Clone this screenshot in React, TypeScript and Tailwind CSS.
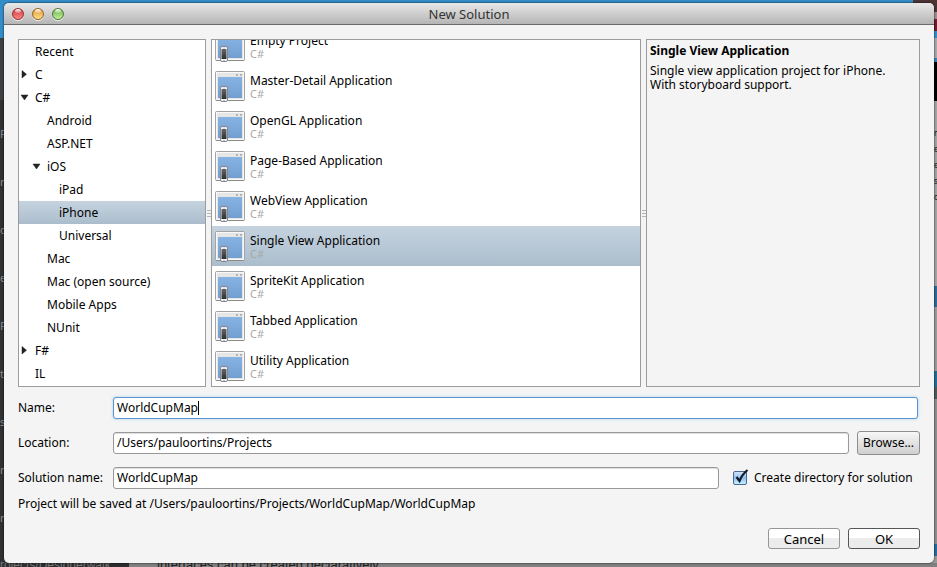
import React, { useState } from "react";

type Node = { label: string; level: 0 | 1 | 2; state?: "open" | "closed" };

const TREE: Node[] = [
  { label: "Recent", level: 0 },
  { label: "C", level: 0, state: "closed" },
  { label: "C#", level: 0, state: "open" },
  { label: "Android", level: 1 },
  { label: "ASP.NET", level: 1 },
  { label: "iOS", level: 1, state: "open" },
  { label: "iPad", level: 2 },
  { label: "iPhone", level: 2 },
  { label: "Universal", level: 2 },
  { label: "Mac", level: 1 },
  { label: "Mac (open source)", level: 1 },
  { label: "Mobile Apps", level: 1 },
  { label: "NUnit", level: 1 },
  { label: "F#", level: 0, state: "closed" },
  { label: "IL", level: 0 },
];

const TEMPLATES = [
  "Empty Project",
  "Master-Detail Application",
  "OpenGL Application",
  "Page-Based Application",
  "WebView Application",
  "Single View Application",
  "SpriteKit Application",
  "Tabbed Application",
  "Utility Application",
];

const INDENT = { 0: "pl-0", 1: "pl-3", 2: "pl-6" };
const SELECTED = "bg-linear-to-b from-[#c5d3df] to-[#abbdcc]";

function Triangle({ state }: { state?: "open" | "closed" }) {
  return (
    <svg className="h-3 w-4 shrink-0" viewBox="0 0 16 12" aria-hidden="true">
      {state === "open" && <path d="M2 3h7L5.500 8z" fill="#222" stroke="#222" strokeWidth="0.5" />}
      {state === "closed" && <path d="M3 1.500v7.500L7.500 5.250z" fill="#222" stroke="#222" strokeWidth="0.5" />}
    </svg>
  );
}

function TemplateIcon() {
  return (
    <svg className="h-8 w-[30px] shrink-0" viewBox="0 0 30 32" aria-hidden="true">
      <defs>
        <linearGradient id="pane" x1="0" y1="0" x2="0" y2="1">
          <stop offset="0" stopColor="#87b3e3" />
          <stop offset="1" stopColor="#719fd0" />
        </linearGradient>
        <linearGradient id="screen" x1="0" y1="0" x2="0" y2="1">
          <stop offset="0" stopColor="#666" />
          <stop offset="1" stopColor="#2e2e2e" />
        </linearGradient>
      </defs>
      <rect x="0.5" y="1.500" width="29" height="29" rx="1" fill="#e6e6e6" stroke="#a3a3a3" />
      <path d="M1 30.500h28" stroke="#8a8a8a" />
      <rect x="1.500" y="2.500" width="27" height="27" fill="none" stroke="#f8f8f8" />
      <rect x="21" y="4" width="2" height="2" fill="#b4b4b4" />
      <rect x="25" y="4" width="2" height="2" fill="#b4b4b4" />
      <rect x="3" y="7" width="24" height="21" fill="url(#pane)" />
      <rect x="5.500" y="16.500" width="7" height="15" rx="1.500" fill="#f6f6f6" stroke="#7f8894" />
      <rect x="6.500" y="19" width="5" height="10" fill="url(#screen)" />
      <path d="M8 18h2M8 30.500h2" stroke="#c4c4c4" />
    </svg>
  );
}

function Light({ tone, label }: { tone: string; label: string }) {
  return (
    <button
      type="button"
      aria-label={label}
      className={`relative size-3 overflow-hidden rounded-full border shadow-[0_1px_0_#f0f0f0] ${tone}`}
    >
      <span className="absolute inset-x-[2px] top-0 h-1 rounded-full bg-linear-to-b from-white to-white/20" />
    </button>
  );
}

function Splitter() {
  return (
    <div className="flex w-[5px] shrink-0 flex-col items-center justify-center gap-[2px]">
      <span className="h-px w-1 bg-[#b5b5b5]" />
      <span className="h-px w-1 bg-[#b5b5b5]" />
      <span className="h-px w-1 bg-[#b5b5b5]" />
    </div>
  );
}

const LEFT_SCRAPS = ["F", "r", "o", "e", "F", "t", "s", "r", "r"];
const RIGHT_SCRAPS = ["n", "e", "e", "s", "o"];

function Backdrop() {
  return (
    <div aria-hidden="true" className="absolute inset-0 -z-10 flex flex-col overflow-hidden bg-[#808080]">
      <div className="flex min-h-0 flex-1 justify-between">
        <div className="flex w-1/2 flex-col bg-[#2f3132]">
          <div className="h-[38px] shrink-0 bg-[#348cc9]" />
          <div className="h-[62px] shrink-0 bg-[#3e4143]" />
          <div className="flex w-1 flex-col overflow-hidden pt-[10px] text-[11px] text-[#8a8a8a]">
            {LEFT_SCRAPS.map((s, i) => (
              <span key={i} className="h-12 shrink-0 leading-[48px]">{s}</span>
            ))}
          </div>
        </div>
        <div className="flex w-1/2 flex-col bg-[#9a9a9a]">
          <div className="flex h-[38px] justify-end bg-[#348cc9]">
            <div className="flex flex-col">
              <div className="h-3 w-6 bg-[#4c3434]" />
              <div className="h-[7px] w-6 bg-[#9d8d90]" />
              <div className="h-3 w-6 bg-[#6f1c2e]" />
            </div>
          </div>
          <div className="h-5 bg-[#a6a8aa]" />
          <div className="h-1 bg-[#3283bb]" />
          <div className="h-[39px] bg-black" />
          <div className="flex h-[185px] flex-col items-end overflow-hidden bg-[#a3a3a3] pt-6 text-[8px] leading-4 text-[#222]">
            {RIGHT_SCRAPS.map((s, i) => (
              <span key={i} className="w-[3px] overflow-hidden">{s}</span>
            ))}
          </div>
          <div className="h-[21px] bg-[#2d6b98]" />
          <div className="h-[64px] bg-[#9a9a9a]" />
          <div className="h-4 bg-[#226d98]" />
          <div className="h-3 bg-[#4b5959]" />
          <div className="h-[145px] bg-[#8e8e8e]" />
          <div className="h-3 bg-[#286c9c]" />
        </div>
      </div>
      <div className="flex h-1 bg-[#808080] font-['Liberation_Sans',sans-serif] leading-1 whitespace-nowrap">
        <div className="w-[129px] bg-[#2b2d2e] text-xs leading-1 text-[#777]">rojects/Designerwalk</div>
        <div className="pl-7 text-[13px] leading-1 text-[#222]">interfaces can be created declaratively...</div>
      </div>
    </div>
  );
}

const FIELD =
  "h-[22px] min-w-0 flex-1 rounded-[3px] border border-[#999] bg-white px-[3px] shadow-[inset_0_1px_1px_#ddd] outline-none";

export default function App() {
  const [tree, setTree] = useState("iPhone");
  const [template, setTemplate] = useState("Single View Application");

  return (
    <div className="relative isolate flex min-h-screen flex-col pt-[3px] pr-[3px] pb-1 pl-1 font-['Noto_Sans','Open_Sans',sans-serif] text-xs text-black">
      <Backdrop />
      <main className="flex flex-1 flex-col overflow-hidden rounded-[5px] bg-[#f4f4f4] shadow-[0_0_2px_#000]">
        <header className="flex h-[22px] items-center border-b border-[#6b6b6b] bg-linear-to-b from-[#e8e8e8] to-[#b5b5b5] px-2">
          <div className="flex flex-1 gap-2">
            <Light label="Close" tone="border-[#8f3434] bg-linear-to-b from-[#c93440] to-[#ff8585]" />
            <Light label="Minimize" tone="border-[#946329] bg-linear-to-b from-[#dc942f] to-[#ffe28a]" />
            <Light label="Zoom" tone="border-[#4b7a34] bg-linear-to-b from-[#69ad4b] to-[#c4f09a]" />
          </div>
          <h1 className="text-[13px] leading-5 text-[#333]">New Solution</h1>
          <div className="flex-1" />
        </header>

        <div className="flex min-h-0 flex-1 flex-col p-[14px]">
          <div className="flex h-[348px] flex-auto">
            <nav className="w-[188px] shrink-0 overflow-hidden border border-[#9c9c9c] bg-white">
              {TREE.map((n) => (
                <button
                  key={n.label}
                  type="button"
                  onClick={() => setTree(n.label)}
                  className={`flex h-[23px] w-full items-center text-left ${tree === n.label ? SELECTED : ""}`}
                >
                  <span className={`flex items-center ${INDENT[n.level]}`}>
                    <Triangle state={n.state} />
                    {n.label}
                  </span>
                </button>
              ))}
            </nav>
            <Splitter />
            <section className="flex min-w-0 flex-1 flex-col justify-end overflow-hidden border border-[#9c9c9c] bg-white">
              {TEMPLATES.map((t) => (
                <button
                  key={t}
                  type="button"
                  onClick={() => setTemplate(t)}
                  className={`flex h-10 w-full shrink-0 items-center gap-[5px] pl-[3px] text-left ${template === t ? SELECTED : ""}`}
                >
                  <TemplateIcon />
                  <span className="flex flex-col pt-px">
                    <span className="leading-[14px]">{t}</span>
                    <span className="text-[11px] leading-[11px] text-[#a8a8a8]">C#</span>
                  </span>
                </button>
              ))}
            </section>
            <Splitter />
            <section className="w-[274px] shrink-0 border border-[#9c9c9c] px-[3px] py-1 leading-[14px]">
              <h2 className="mb-[6px] font-bold">Single View Application</h2>
              <p>
                Single view application project for iPhone.
                <br />
                With storyboard support.
              </p>
            </section>
          </div>

          <form className="mt-[3px]" onSubmit={(e) => e.preventDefault()}>
            <div className="flex h-[35px] items-center pr-[2px]">
              <label htmlFor="name" className="w-[95px] shrink-0">Name:</label>
              <div className="relative flex flex-1">
                <input
                  id="name"
                  defaultValue="WorldCupMap"
                  className="h-[22px] min-w-0 flex-1 rounded-[3px] border border-[#5a94d0] bg-white px-[3px] caret-transparent shadow-[0_0_3px_#a5c8ee] outline-none"
                />
                <span className="absolute top-1 left-[85px] h-[14px] w-px bg-black" />
              </div>
            </div>
            <div className="flex h-[35px] items-center">
              <label htmlFor="location" className="w-[95px] shrink-0">Location:</label>
              <input id="location" defaultValue="/Users/pauloortins/Projects" className={FIELD} />
              <button
                type="button"
                className="ml-2 h-6 w-[63px] rounded-[3px] border border-[#8e8e8e] bg-linear-to-b from-[#f7f7f7] to-[#cfcfcf]"
              >
                Browse...
              </button>
            </div>
            <div className="flex h-[35px] items-center">
              <label htmlFor="solution" className="w-[95px] shrink-0">Solution name:</label>
              <input id="solution" defaultValue="WorldCupMap" className={FIELD} />
              <label className="flex w-[201px] items-center gap-[7px] pl-[14px] whitespace-nowrap">
                <span className="relative flex size-[14px]">
                  <input
                    type="checkbox"
                    defaultChecked
                    className="peer size-[14px] appearance-none rounded-[2px] border border-[#4a6796] bg-linear-to-b from-[#d3e4f8] via-[#8ebcf0] to-[#c8f2ff]"
                  />
                  <svg
                    className="pointer-events-none absolute -top-[3px] left-0 hidden h-[17px] w-4 peer-checked:block"
                    viewBox="0 0 16 17"
                    fill="none"
                    aria-hidden="true"
                  >
                    <path d="M3.500 9L6.500 13C8 9 11 5 14.500 2" stroke="#111a2a" strokeWidth="2.200" />
                  </svg>
                </span>
                Create directory for solution
              </label>
            </div>
            <p className="leading-[18px]">
              Project will be saved at /Users/pauloortins/Projects/WorldCupMap/WorldCupMap
            </p>
            <div className="mt-[15px] flex justify-end gap-2 text-[13px]">
              <button
                type="button"
                className="h-[21px] w-[72px] rounded-[3px] border border-[#969696] bg-linear-to-b from-white from-50% to-[#ececec] to-50% leading-4"
              >
                Cancel
              </button>
              <button
                type="submit"
                className="h-[21px] w-[72px] rounded-[3px] border border-[#555] bg-linear-to-b from-white from-50% to-[#ececec] to-50% leading-4"
              >
                OK
              </button>
            </div>
          </form>
        </div>
      </main>
    </div>
  );
}
